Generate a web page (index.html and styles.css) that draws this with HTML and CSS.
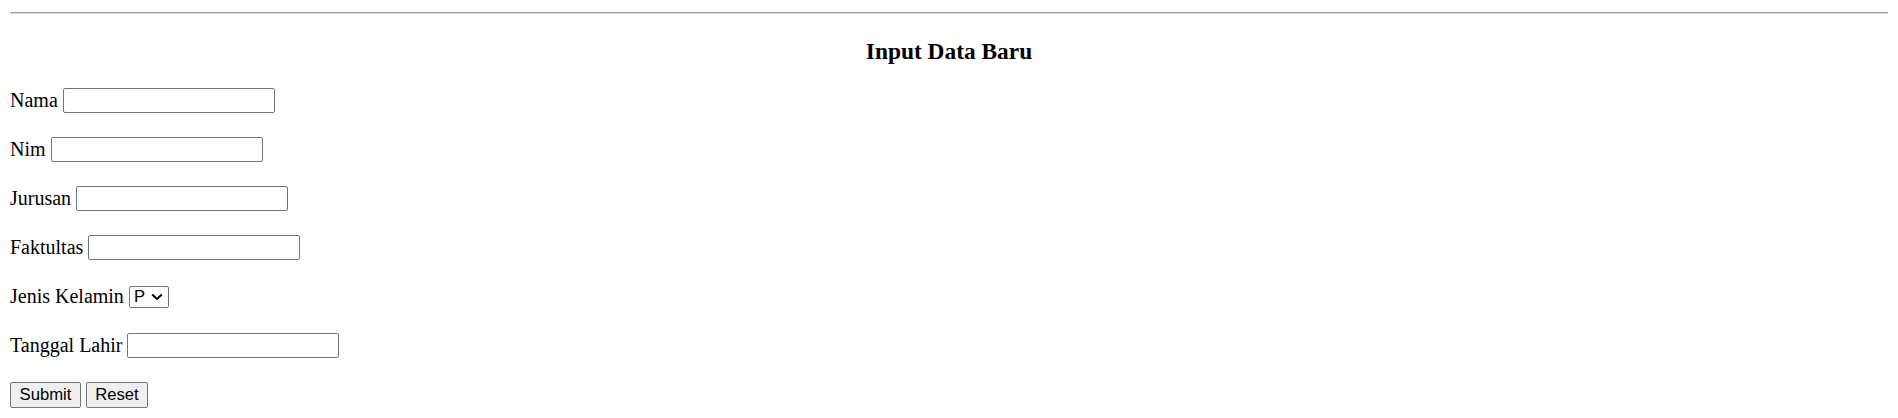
FILE: index.html
```html
<!DOCTYPE html>
<html lang="id">
<head>
<meta charset="utf-8">
<title>Input Data Baru</title>
<link rel="stylesheet" href="styles.css">
</head>
<body>
<hr class="rule">
<h3 class="title">Input Data Baru</h3>
<form class="form">
  <p class="row"><label class="lbl">Nama</label><input class="field" type="text"></p>
  <p class="row"><label class="lbl">Nim</label><input class="field" type="text"></p>
  <p class="row"><label class="lbl">Jurusan</label><input class="field" type="text"></p>
  <p class="row"><label class="lbl">Faktultas</label><input class="field" type="text"></p>
  <p class="row"><label class="lbl">Jenis Kelamin</label><span class="select-wrap"><select class="choice"><option>P</option><option>L</option></select><svg class="chev" width="12" height="8" viewBox="0 0 12 8"><path d="M1.2 1.5 L6 6 L10.8 1.5" fill="none" stroke="#000" stroke-width="2"/></svg></span></p>
  <p class="row"><label class="lbl">Tanggal Lahir</label><input class="field" type="text"></p>
  <p class="row row-last"><button class="btn btn-submit" type="button">Submit</button><button class="btn btn-reset" type="button">Reset</button></p>
</form>
</body>
</html>
```
FILE: styles.css
```css
html, body {
  background: #ffffff;
}
body {
  margin: 0;
  padding: 0 10px;
  font-family: "Liberation Serif", "Times New Roman", serif;
  font-size: 20px;
  color: #000000;
}
.rule {
  margin: 12px 0 0 0;
  height: 0;
  border: none;
  border-top: 1px solid #9a9a9a;
  border-bottom: 1px solid #dcdcdc;
}
.title {
  margin: 24px 0 21px 0;
  font-size: 23.4px;
  font-weight: bold;
  text-align: center;
  line-height: 27px;
}
.form {
  margin: 0;
}
.row {
  display: flex;
  align-items: center;
  gap: 5px;
  min-height: 29px;
  margin: 20px 0;
}
.row-last {
  margin-bottom: 0;
}
.lbl {
  line-height: 23px;
}
.field {
  box-sizing: border-box;
  width: 212px;
  height: 25px;
  margin: 0;
  padding: 1px 3px;
  border: 1px solid #767676;
  border-radius: 2px;
  background: #ffffff;
  font-family: "Liberation Sans", Arial, sans-serif;
  font-size: 16.67px;
}
.select-wrap {
  position: relative;
  display: inline-flex;
}
.choice {
  box-sizing: border-box;
  width: 40px;
  height: 22px;
  margin: 0;
  padding: 0 0 0 4px;
  border: 1px solid #767676;
  border-radius: 2px;
  background-color: #ffffff;
  font-family: "Liberation Sans", Arial, sans-serif;
  font-size: 16.67px;
  color: #000000;
  appearance: none;
  -webkit-appearance: none;
}
.chev {
  position: absolute;
  left: 22px;
  top: 7px;
  pointer-events: none;
}
.btn {
  box-sizing: border-box;
  height: 26px;
  margin: 0;
  padding: 0 8px;
  border: 1px solid #767676;
  border-radius: 2px;
  background: #efefef;
  font-family: "Liberation Sans", Arial, sans-serif;
  font-size: 16.67px;
  color: #000000;
}
.btn-submit {
  width: 71px;
}
.btn-reset {
  width: 62px;
}
```
